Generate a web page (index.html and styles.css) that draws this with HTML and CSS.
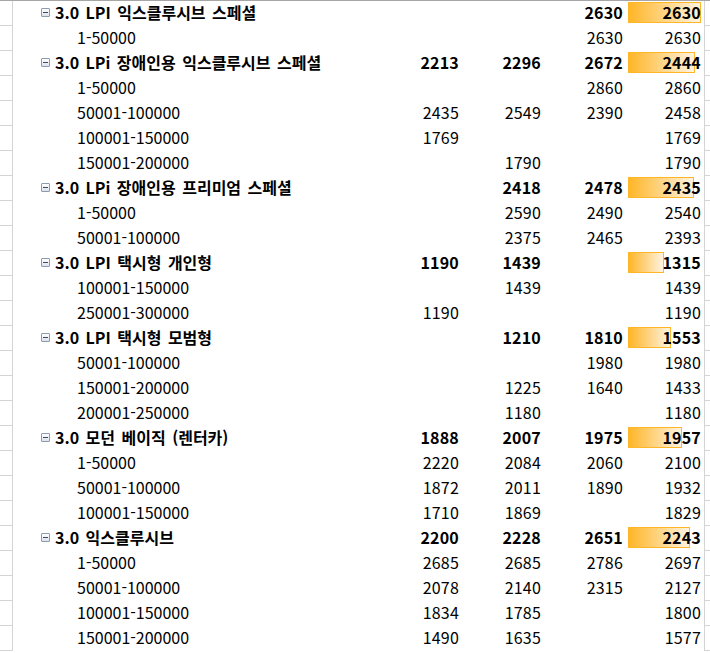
FILE: index.html
```html
<!DOCTYPE html>
<html lang="ko">
<head>
<meta charset="utf-8">
<title>Pivot</title>
<link rel="stylesheet" href="styles.css">
</head>
<body>
<div class="sheet">
  <div class="strip strip-left">
    <div></div><div></div><div></div><div></div><div></div><div></div><div></div><div></div><div></div><div></div><div></div><div></div><div></div>
    <div></div><div></div><div></div><div></div><div></div><div></div><div></div><div></div><div></div><div></div><div></div><div></div><div></div>
  </div>
  <div class="pivot">
    <div class="row group"><div class="label"><span class="tog"></span>3.0 LPI 익스클루시브 스페셜</div><div class="n"></div><div class="n"></div><div class="n">2630</div><div class="n last"><span class="bar" style="width:73px"></span><span class="v">2630</span></div></div>
    <div class="row"><div class="label">1-50000</div><div class="n"></div><div class="n"></div><div class="n">2630</div><div class="n last"><span class="v">2630</span></div></div>
    <div class="row group"><div class="label"><span class="tog"></span>3.0 LPi 장애인용 익스클루시브 스페셜</div><div class="n">2213</div><div class="n">2296</div><div class="n">2672</div><div class="n last"><span class="bar" style="width:67px"></span><span class="v">2444</span></div></div>
    <div class="row"><div class="label">1-50000</div><div class="n"></div><div class="n"></div><div class="n">2860</div><div class="n last"><span class="v">2860</span></div></div>
    <div class="row"><div class="label">50001-100000</div><div class="n">2435</div><div class="n">2549</div><div class="n">2390</div><div class="n last"><span class="v">2458</span></div></div>
    <div class="row"><div class="label">100001-150000</div><div class="n">1769</div><div class="n"></div><div class="n"></div><div class="n last"><span class="v">1769</span></div></div>
    <div class="row"><div class="label">150001-200000</div><div class="n"></div><div class="n">1790</div><div class="n"></div><div class="n last"><span class="v">1790</span></div></div>
    <div class="row group"><div class="label"><span class="tog"></span>3.0 LPi 장애인용 프리미엄 스페셜</div><div class="n"></div><div class="n">2418</div><div class="n">2478</div><div class="n last"><span class="bar" style="width:66px"></span><span class="v">2435</span></div></div>
    <div class="row"><div class="label">1-50000</div><div class="n"></div><div class="n">2590</div><div class="n">2490</div><div class="n last"><span class="v">2540</span></div></div>
    <div class="row"><div class="label">50001-100000</div><div class="n"></div><div class="n">2375</div><div class="n">2465</div><div class="n last"><span class="v">2393</span></div></div>
    <div class="row group"><div class="label"><span class="tog"></span>3.0 LPI 택시형 개인형</div><div class="n">1190</div><div class="n">1439</div><div class="n"></div><div class="n last"><span class="bar" style="width:36px"></span><span class="v">1315</span></div></div>
    <div class="row"><div class="label">100001-150000</div><div class="n"></div><div class="n">1439</div><div class="n"></div><div class="n last"><span class="v">1439</span></div></div>
    <div class="row"><div class="label">250001-300000</div><div class="n">1190</div><div class="n"></div><div class="n"></div><div class="n last"><span class="v">1190</span></div></div>
    <div class="row group"><div class="label"><span class="tog"></span>3.0 LPI 택시형 모범형</div><div class="n"></div><div class="n">1210</div><div class="n">1810</div><div class="n last"><span class="bar" style="width:43px"></span><span class="v">1553</span></div></div>
    <div class="row"><div class="label">50001-100000</div><div class="n"></div><div class="n"></div><div class="n">1980</div><div class="n last"><span class="v">1980</span></div></div>
    <div class="row"><div class="label">150001-200000</div><div class="n"></div><div class="n">1225</div><div class="n">1640</div><div class="n last"><span class="v">1433</span></div></div>
    <div class="row"><div class="label">200001-250000</div><div class="n"></div><div class="n">1180</div><div class="n"></div><div class="n last"><span class="v">1180</span></div></div>
    <div class="row group"><div class="label"><span class="tog"></span>3.0 모던 베이직 (렌터카)</div><div class="n">1888</div><div class="n">2007</div><div class="n">1975</div><div class="n last"><span class="bar" style="width:54px"></span><span class="v">1957</span></div></div>
    <div class="row"><div class="label">1-50000</div><div class="n">2220</div><div class="n">2084</div><div class="n">2060</div><div class="n last"><span class="v">2100</span></div></div>
    <div class="row"><div class="label">50001-100000</div><div class="n">1872</div><div class="n">2011</div><div class="n">1890</div><div class="n last"><span class="v">1932</span></div></div>
    <div class="row"><div class="label">100001-150000</div><div class="n">1710</div><div class="n">1869</div><div class="n"></div><div class="n last"><span class="v">1829</span></div></div>
    <div class="row group"><div class="label"><span class="tog"></span>3.0 익스클루시브</div><div class="n">2200</div><div class="n">2228</div><div class="n">2651</div><div class="n last"><span class="bar" style="width:62px"></span><span class="v">2243</span></div></div>
    <div class="row"><div class="label">1-50000</div><div class="n">2685</div><div class="n">2685</div><div class="n">2786</div><div class="n last"><span class="v">2697</span></div></div>
    <div class="row"><div class="label">50001-100000</div><div class="n">2078</div><div class="n">2140</div><div class="n">2315</div><div class="n last"><span class="v">2127</span></div></div>
    <div class="row"><div class="label">100001-150000</div><div class="n">1834</div><div class="n">1785</div><div class="n"></div><div class="n last"><span class="v">1800</span></div></div>
    <div class="row"><div class="label">150001-200000</div><div class="n">1490</div><div class="n">1635</div><div class="n"></div><div class="n last"><span class="v">1577</span></div></div>
  </div>
  <div class="strip strip-right">
    <div></div><div></div><div></div><div></div><div></div><div></div><div></div><div></div><div></div><div></div><div></div><div></div><div></div>
    <div></div><div></div><div></div><div></div><div></div><div></div><div></div><div></div><div></div><div></div><div></div><div></div><div></div>
  </div>
</div>
</body>
</html>
```

FILE: styles.css
```css
* { box-sizing: border-box; }
html, body { margin: 0; padding: 0; background: #ffffff; }
body {
  width: 710px;
  height: 653px;
  overflow: hidden;
  font-family: "Noto Sans CJK KR", "Noto Sans", sans-serif;
  font-size: 16px;
  color: #000;
}
.sheet {
  display: flex;
  border-top: 1px solid #a6a6a6;
}
.strip { display: flex; flex-direction: column; }
.strip > div { height: 25px; border-bottom: 1px solid #d4d4d4; }
.strip-left { width: 13px; border-right: 1px solid #d4d4d4; }
.strip-right { width: 6px; border-left: 1px solid #d4d4d4; }
.pivot { width: 691px; display: flex; flex-direction: column; }
.row {
  display: grid;
  grid-template-columns: 364px 82px 82px 82px 81px;
  height: 25px;
  line-height: 23px;
}
.label {
  padding-left: 64px;
  white-space: nowrap;
  display: flex;
  align-items: center;
  height: 23px;
  word-spacing: 2px;
}
.group .label { padding-left: 28px; }
.group { font-weight: 700; }
.n { text-align: right; white-space: nowrap; height: 25px; letter-spacing: 0.2px; }
.last { position: relative; padding-right: 3px; }
.v { position: relative; }
.bar {
  position: absolute;
  left: 5px;
  top: 1px;
  height: 21px;
  border: 1px solid #ffb628;
  background: linear-gradient(to right, #ffb628, #fff3e0);
}
.tog {
  position: relative;
  width: 9px;
  height: 9px;
  margin-right: 5px;
  border: 1px solid #8e9ab0;
  border-radius: 1px;
  background: linear-gradient(#ffffff, #dde2ea);
  flex: none;
}
.tog::after {
  content: "";
  position: absolute;
  left: 1px;
  top: 3px;
  width: 5px;
  height: 1px;
  background: #3c4a66;
}
```
